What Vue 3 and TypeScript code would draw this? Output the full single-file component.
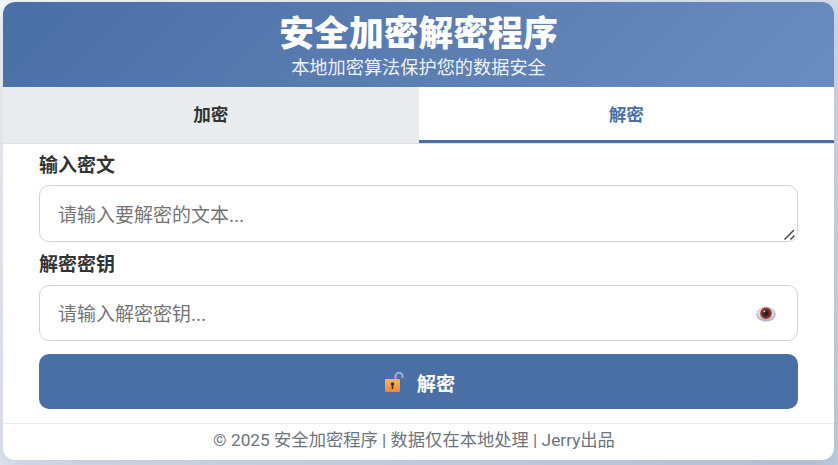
<script setup lang="ts">
import { ref } from 'vue'

const activeTab = ref<'encrypt' | 'decrypt'>('decrypt')
const cipherText = ref('')
const secretKey = ref('')
</script>

<template>
  <div class="card">
    <header class="header">
      <h1 class="title">安全加密解密程序</h1>
      <p class="subtitle">本地加密算法保护您的数据安全</p>
    </header>
    <nav class="tabs">
      <button class="tab" :class="{ active: activeTab === 'encrypt' }" @click="activeTab = 'encrypt'">加密</button>
      <button class="tab" :class="{ active: activeTab === 'decrypt' }" @click="activeTab = 'decrypt'">解密</button>
    </nav>
    <main class="form">
      <label class="label" for="cipher">输入密文</label>
      <div class="area-wrap">
        <textarea id="cipher" v-model="cipherText" class="field area" placeholder="请输入要解密的文本..."></textarea>
        <svg class="grip" width="13" height="13" viewBox="0 0 13 13" aria-hidden="true">
          <path d="M1.5 11.5 11 2M7.5 11.5 11.5 7.5" fill="none" stroke="#4a4a4a" stroke-width="1.5" />
        </svg>
      </div>
      <label class="label key-label" for="key">解密密钥</label>
      <div class="key-wrap">
        <input id="key" v-model="secretKey" class="field key" type="password" placeholder="请输入解密密钥..." />
        <svg class="eye" width="20" height="16" viewBox="0 0 20 16" aria-hidden="true">
          <defs>
            <radialGradient id="iris" cx="50%" cy="50%" r="50%">
              <stop offset="0" stop-color="#2c1d28" />
              <stop offset="0.4" stop-color="#5e1e2c" />
              <stop offset="0.72" stop-color="#7d2f30" />
              <stop offset="1" stop-color="#b0713f" />
            </radialGradient>
          </defs>
          <ellipse cx="10" cy="8.2" rx="9.8" ry="7.4" fill="#bfb4d2" />
          <ellipse cx="9.8" cy="7.2" rx="8.6" ry="6" fill="#dfd8e8" />
          <circle cx="10" cy="7.2" r="6" fill="url(#iris)" />
          <circle cx="10" cy="7.2" r="2.2" fill="#231a24" />
          <circle cx="8.3" cy="5.4" r="0.9" fill="#e9dfe6" />
        </svg>
      </div>
      <button class="submit">
        <svg class="lock" width="20" height="21" viewBox="0 0 20 21" aria-hidden="true">
          <defs>
            <linearGradient id="body" x1="0" y1="0" x2="0" y2="1">
              <stop offset="0" stop-color="#ffb84d" />
              <stop offset="1" stop-color="#f0853a" />
            </linearGradient>
          </defs>
          <path d="M11.5 7.5V4.6a3.5 3.5 0 0 1 7 -0.6V6" fill="none" stroke="#a4afc2" stroke-width="2" />
          <rect x="1" y="7" width="15" height="13" rx="1.2" fill="url(#body)" />
          <circle cx="8.5" cy="12" r="1.8" fill="#37344f" />
          <rect x="7.7" y="12" width="1.6" height="5" fill="#37344f" />
        </svg>
        <span>解密</span>
      </button>
    </main>
    <footer class="footer">© 2025 安全加密程序 | 数据仅在本地处理 | Jerry出品</footer>
  </div>
</template>

<style scoped>
.card {
  display: flex;
  flex-direction: column;
  width: 831px;
  height: 458px;
  box-sizing: border-box;
  background: #fff;
  border-radius: 12px;
  overflow: hidden;
  box-shadow: 0 8px 24px rgba(50, 70, 110, 0.18);
  font-family: "Open Sans", "Noto Sans CJK SC", sans-serif;
  color: #333;
}
.header {
  height: 85px;
  flex: none;
  box-sizing: border-box;
  padding-top: 9px;
  text-align: center;
  color: #fff;
  background: linear-gradient(135deg, #4a6fa5, #6b8cbe);
}
.title {
  margin: 0;
  font-size: 34.8px;
  line-height: 44px;
  font-weight: 900;
}
.subtitle {
  margin: 0;
  font-size: 18.2px;
  line-height: 24px;
  opacity: 0.9;
}
.tabs {
  display: flex;
  height: 57px;
  flex: none;
  box-sizing: border-box;
  border-bottom: 1px solid #dee2e6;
}
.tab {
  flex: 1;
  border: 0;
  border-bottom: 3px solid transparent;
  background: #e9ecef;
  color: #333;
  font: 700 17.6px "Open Sans", "Noto Sans CJK SC", sans-serif;
  padding: 0;
}
.tab.active {
  background: #fff;
  color: #4a6fa5;
  border-bottom-color: #4a6fa5;
}
.form {
  flex: 1;
  display: flex;
  flex-direction: column;
  padding: 8px 36px 0;
}
.label {
  font-size: 19px;
  line-height: 26px;
  font-weight: 700;
  color: #333;
  margin-bottom: 7px;
}
.key-label {
  margin-top: 9px;
  margin-bottom: 8px;
}
.field {
  width: 100%;
  box-sizing: border-box;
  display: block;
  border: 1px solid #ced4da;
  border-radius: 10px;
  padding: 0 18px;
  font-family: "Open Sans", "Noto Sans CJK SC", sans-serif;
  font-size: 19px;
  color: #333;
  outline: none;
}
.field::placeholder {
  color: #757575;
}
.area-wrap {
  position: relative;
}
.area {
  height: 57px;
  padding-top: 16px;
  line-height: 26px;
}
.area::-webkit-resizer {
  background: transparent;
}
.grip {
  position: absolute;
  right: 2px;
  bottom: 1px;
  pointer-events: none;
}
.key-wrap {
  position: relative;
}
.key {
  height: 56px;
  padding-top: 1px;
}
.eye {
  position: absolute;
  right: 22px;
  top: 21px;
}
.submit {
  margin-top: 13px;
  height: 55px;
  border: 0;
  border-radius: 10px;
  background: #4a6fa5;
  color: #fff;
  font: 700 19.2px "Open Sans", "Noto Sans CJK SC", sans-serif;
  display: flex;
  align-items: center;
  justify-content: center;
  gap: 13px;
  padding: 2px 0 0 2px;
}
.footer {
  flex: none;
  height: 37px;
  box-sizing: border-box;
  border-top: 1px solid #e9ecef;
  padding-right: 9px;
  text-align: center;
  font-family: Roboto, "Noto Sans CJK SC", sans-serif;
  font-size: 17.3px;
  line-height: 33px;
  color: #6c757d;
}
</style>

<style>
html, body {
  margin: 0;
  height: 100%;
}
body {
  box-sizing: border-box;
  padding: 2px 0 0 3px;
  overflow: hidden;
  background: linear-gradient(135deg, #f5f7fa, #c3cfe2);
}
</style>
